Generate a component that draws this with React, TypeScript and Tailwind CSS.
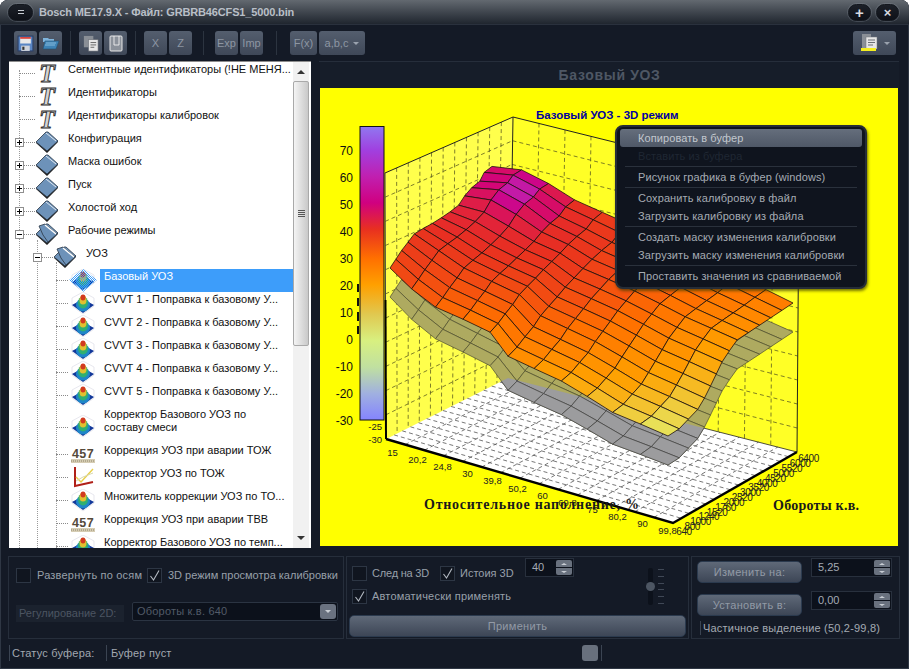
import React from "react";

type Pt = [number, number];

const sans = "font-['Liberation_Sans',Arial,sans-serif]";

/* ---------- chart geometry (coordinates are page pixels, see viewBox) ---------- */
const frontLeft: Pt[] = [[390, 268], [420, 297], [440, 310], [465, 320], [490, 332], [513, 363], [540, 370], [573, 387], [600, 405], [617, 415], [643, 425], [668, 436]];
const backRight: Pt[] = [[492, 167], [517, 170], [540, 180], [567, 197], [613, 217], [660, 238], [710, 262], [793, 303]];
const leftBack: Pt[] = [[390, 268], [402, 250], [415, 233], [435, 222], [458, 207], [468, 193], [480, 183], [485, 172], [492, 167]];
const frontRight: Pt[] = [[668, 436], [678, 430], [700, 407], [710, 387], [723, 360], [737, 340], [763, 323], [793, 303]];

function sample(pts: Pt[], t: number): Pt {
  const seg = pts.slice(1).map((p, i) => Math.hypot(p[0] - pts[i][0], p[1] - pts[i][1]));
  let d = t * seg.reduce((a, b) => a + b, 0);
  for (let i = 0; i < seg.length; i++) {
    if (d <= seg[i] || i === seg.length - 1) {
      const k = seg[i] ? d / seg[i] : 0;
      return [pts[i][0] + (pts[i + 1][0] - pts[i][0]) * k, pts[i][1] + (pts[i + 1][1] - pts[i][1]) * k];
    }
    d -= seg[i];
  }
  return pts[0];
}

function surfacePoint(u: number, v: number): Pt {
  const c0 = sample(frontLeft, u);
  const c1 = sample(backRight, u);
  const d0 = sample(leftBack, v);
  const d1 = sample(frontRight, v);
  const L = frontLeft[0];
  const F = frontLeft[frontLeft.length - 1];
  const B = backRight[0];
  const R = backRight[backRight.length - 1];
  const out = [0, 1].map(
    (i) =>
      (1 - v) * c0[i] + v * c1[i] + (1 - u) * d0[i] + u * d1[i] -
      ((1 - u) * (1 - v) * L[i] + u * (1 - v) * F[i] + (1 - u) * v * B[i] + u * v * R[i])
  );
  const bump = 9 * Math.exp(-((u - 0.13) ** 2 / 0.012 + (v - 0.8) ** 2 / 0.03));
  return [out[0], out[1] - bump];
}

const ramp: [number, number[]][] = [
  [-30, [128, 128, 255]], [-20, [160, 176, 224]], [-10, [192, 224, 160]], [0, [216, 240, 128]],
  [10, [232, 224, 88]], [20, [255, 160, 0]], [30, [255, 112, 0]], [40, [232, 48, 32]],
  [50, [208, 0, 128]], [60, [192, 32, 176]], [70, [160, 64, 224]], [80, [144, 112, 240]],
];

function rampColor(val: number): string {
  for (let i = 0; i < ramp.length - 1; i++) {
    if (val <= ramp[i + 1][0]) {
      const k = Math.max(0, (val - ramp[i][0]) / 10);
      const c = ramp[i][1].map((x, j) => Math.round(x + (ramp[i + 1][1][j] - x) * k));
      return `rgb(${c.join(",")})`;
    }
  }
  return "rgb(144,112,240)";
}

function surfaceValue(u: number, v: number): number {
  const base = (1 - u) * (1 - v) * 37 + u * (1 - v) * 8 + (1 - u) * v * 46 + u * v * 27;
  const middle = 6 * Math.sin(Math.PI * u) * Math.sin(Math.PI * v);
  return base + middle + 16 * Math.exp(-((u - 0.14) ** 2 / 0.008 + (v - 0.85) ** 2 / 0.02));
}

const NU = 11;
const NV = 14;

function cells(shift: (u: number) => number) {
  const out: { key: string; pts: string; u: number; v: number }[] = [];
  for (let j = NV - 1; j >= 0; j--) {
    for (let i = 0; i < NU; i++) {
      const corners = [[i, j], [i + 1, j], [i + 1, j + 1], [i, j + 1]].map(([a, b]) => {
        const p = surfacePoint(a / NU, b / NV);
        return [p[0], p[1] + shift(a / NU)];
      });
      out.push({
        key: `${i}-${j}`,
        pts: corners.map((p) => `${p[0].toFixed(1)},${p[1].toFixed(1)}`).join(" "),
        u: (i + 0.5) / NU,
        v: (j + 0.5) / NV,
      });
    }
  }
  return out;
}

function DashedGrid({ a, b, c, d, nx, ny, stroke }: { a: Pt; b: Pt; c: Pt; d: Pt; nx: number; ny: number; stroke: string }) {
  const lerp = (p: Pt, q: Pt, t: number): Pt => [p[0] + (q[0] - p[0]) * t, p[1] + (q[1] - p[1]) * t];
  const lines: [Pt, Pt][] = [];
  for (let i = 1; i < nx; i++) lines.push([lerp(a, b, i / nx), lerp(d, c, i / nx)]);
  for (let i = 1; i < ny; i++) lines.push([lerp(a, d, i / ny), lerp(b, c, i / ny)]);
  return (
    <g stroke={stroke} strokeWidth={0.8} strokeDasharray="4 3" fill="none">
      {lines.map(([p, q], i) => (
        <line key={i} x1={p[0]} y1={p[1]} x2={q[0]} y2={q[1]} />
      ))}
    </g>
  );
}

function Chart() {
  const zLabels = [70, 60, 50, 40, 30, 20, 10, 0, -10, -20, -30];
  const xLabels = ["15", "20,2", "24,8", "30", "39,8", "50,2", "60", "69,8", "75", "80,2", "90", "99,8"];
  const rpm = ["640", "800", "1000", "1240", "1520", "1760", "2000", "2520", "3000", "3520", "4000", "4520", "5000", "5520", "6000", "6400"];
  const floor: Pt[] = [[386, 439], [673, 523], [797, 452], [508, 378]];
  const floorPts = floor.map((p) => p.join(",")).join(" ");
  const shadow = cells((u) => 29 + 5 * Math.sin(Math.PI * u));
  return (
    <svg viewBox="320 88 578 458" className="block h-[458px] w-[578px]" fontFamily="'Liberation Sans', Arial, sans-serif">
      <defs>
        <linearGradient id="zbar" x1="0" y1="0" x2="0" y2="1">
          {[[0, "#9078f0"], [0.08, "#a040e0"], [0.17, "#c020b0"], [0.26, "#d00080"], [0.35, "#e83020"], [0.45, "#ff7000"], [0.54, "#ffa000"], [0.64, "#e0c850"], [0.73, "#d8f080"], [0.82, "#c0e0a0"], [0.91, "#a0b0e0"], [1, "#8484ff"]].map(([o, c]) => (
            <stop key={String(o)} offset={o as number} stopColor={c as string} />
          ))}
        </linearGradient>
        <clipPath id="floorClip">
          <polygon points={floorPts} />
        </clipPath>
      </defs>
      <rect x="320" y="88" width="578" height="458" fill="#ffff00" />

      {/* walls */}
      <polygon points="386,439 385,173 513,117 508,378" fill="#ffff4c" />
      <polygon points="513,117 799,188 797,452 508,378" fill="#ffff26" />
      <DashedGrid a={[385, 173]} b={[513, 117]} c={[508, 378]} d={[386, 439]} nx={11} ny={11} stroke="#5e5e20" />
      <DashedGrid a={[513, 117]} b={[799, 188]} c={[797, 452]} d={[508, 378]} nx={11} ny={11} stroke="#5e5e20" />
      <polygon points={floorPts} fill="#ffffff" />
      <DashedGrid a={[386, 439]} b={[673, 523]} c={[797, 452]} d={[508, 378]} nx={15} ny={15} stroke="#555555" />

      <path d="M385 173 L513 117 L799 188 L797 452 M513 117 L510 300" stroke="#222" strokeWidth={1} fill="none" />
      <path d="M385.5 300 L386 439" stroke="#000" strokeWidth={2} fill="none" />
      <path d="M385 173 L385.5 300" stroke="#444" strokeWidth={1} fill="none" />
      <path d="M386 439 L673 523 L797 452" stroke="#000" strokeWidth={2.4} fill="none" />
      <path d="M508 378 L797 452" stroke="#222" strokeWidth={0.8} fill="none" />

      {/* shadow of the surface on walls and floor */}
      <g stroke="#4b4b32" strokeWidth={0.7}>
        {shadow.map((c) => (
          <polygon key={c.key} points={c.pts} fill="#aeaa60" />
        ))}
      </g>
      <g stroke="#444" strokeWidth={0.7} clipPath="url(#floorClip)">
        {shadow.map((c) => (
          <polygon key={c.key} points={c.pts} fill="#9c9c9e" />
        ))}
      </g>

      {/* surface */}
      <g stroke="#1c1010" strokeWidth={0.8} strokeLinejoin="round">
        {cells(() => 0).map((c) => (
          <polygon key={c.key} points={c.pts} fill={rampColor(surfaceValue(c.u, c.v))} />
        ))}
      </g>

      {/* colour bar */}
      <path d="M358 284 v8 M358 298 v8 M358 312 v9 M358 326 v8" stroke="#111" strokeWidth={2} />
      <rect x="360" y="126.5" width="24" height="293.5" fill="url(#zbar)" stroke="#111" strokeWidth={1} />
      <g fontSize={12} fill="#111" textAnchor="end">
        {zLabels.map((z, i) => (
          <text key={z} x={353} y={154.5 + i * 27}>{z}</text>
        ))}
      </g>
      <g fontSize={9.5} fill="#222" textAnchor="end">
        <text x={382} y={430}>-25</text>
        <text x={382} y={443}>-30</text>
      </g>
      <g fontSize={9.5} fill="#222" textAnchor="middle">
        {xLabels.map((t, i) => (
          <text key={t} x={392.5 + i * 25} y={456 + i * 7.1}>{t}</text>
        ))}
      </g>
      <g fontSize={10} fill="#222" textAnchor="middle" letterSpacing={-0.4}>
        {rpm.map((t, i) => (
          <text key={t} x={684 + i * 8.3} y={535 - i * 4.85}>{t}</text>
        ))}
      </g>

      <text x={536} y={119} fontSize={11.5} fontWeight={700} fill="#0000a0">Базовый УОЗ - 3D режим</text>
      <g fontFamily="'Liberation Serif', serif" fontWeight={700} fontSize={14} fill="#1a1a1a">
        <text x={424} y={509} letterSpacing={0.75}>Относительное наполнение, %</text>
        <text x={773} y={510} letterSpacing={0.25}>Обороты к.в.</text>
      </g>
    </svg>
  );
}

/* ---------- tree icons ---------- */
function TIcon() {
  return (
    <svg viewBox="0 0 22 23" className="h-[23px] w-[22px] overflow-visible">
      <text x="11" y="20" textAnchor="middle" fontFamily="'Liberation Serif', serif" fontStyle="italic" fontWeight={700} fontSize={26} fill="#d4d4d4" stroke="#2e2e2e" strokeWidth={0.9}>T</text>
    </svg>
  );
}

function FolderIcon({ open }: { open?: boolean }) {
  return (
    <svg viewBox="0 0 22 23" className="h-[23px] w-[22px]">
      <polygon points="11,22 22,11 21,9 11,19 1,11 0,12" fill="#222" />
      <polygon points="0,11 10,1 12,1 22,10 11,20" fill="#6d92b9" stroke="#2a3644" strokeWidth={0.8} />
      <polyline points="10,2 20,10" stroke="#fff" strokeWidth={0.8} fill="none" />
      {open && <polygon points="3,3 9,1 21,11 12,19 7,12" fill="#6d92b9" stroke="#2a3644" strokeWidth={0.8} />}
      {open && <polyline points="9,2 20,11" stroke="#fff" strokeWidth={1.4} fill="none" />}
    </svg>
  );
}

function SurfaceIcon({ selected }: { selected?: boolean }) {
  return (
    <svg viewBox="0 0 28 23" className="h-[23px] w-[28px]">
      {selected && (
        <defs>
          <pattern id="dither" width="2" height="2" patternUnits="userSpaceOnUse">
            <rect width="1" height="1" fill="#3d9dfa" />
            <rect x="1" y="1" width="1" height="1" fill="#3d9dfa" />
          </pattern>
        </defs>
      )}
      <polygon points="14,0 25,6 25,14 14,22 3,14 3,6" fill="#ffffff" stroke="#dcdce6" strokeWidth={0.7} />
      <polygon points="14,21 25,13 14,7 3,13" fill="#12389a" />
      <ellipse cx="14" cy="13" rx="7" ry="6.500" fill="#1f86c8" />
      <ellipse cx="14" cy="10.500" rx="5" ry="6" fill="#30b070" />
      <ellipse cx="14" cy="8" rx="3.500" ry="4.500" fill="#e0c030" />
      <ellipse cx="14" cy="5.500" rx="2.500" ry="3" fill="#d23a20" />
      {selected && <polygon points="14,0 28,11 14,23 0,11" fill="url(#dither)" />}
    </svg>
  );
}

function NumIcon() {
  return (
    <svg viewBox="0 0 28 23" className="h-[23px] w-[28px]">
      <text x="14" y="15" textAnchor="middle" fontFamily="'Liberation Sans', sans-serif" fontWeight={700} fontSize={12.5} fill="#55493a" letterSpacing={0.4}>457</text>
      <rect x="2" y="16" width="24" height="4" fill="#d6cdb4" />
      <path d="M2 18h24" stroke="#8d8468" strokeWidth={1} strokeDasharray="1 1" />
    </svg>
  );
}

function GraphIcon() {
  return (
    <svg viewBox="0 0 28 23" className="h-[23px] w-[28px]">
      <path d="M6 1 V20 L24 16" stroke="#b02018" strokeWidth={2} fill="none" />
      <path d="M7 11 L12 16 L24 3" stroke="#e8cf48" strokeWidth={1.4} fill="none" />
      <path d="M7 15 L14 11 L24 7" stroke="#d8d8b0" strokeWidth={1} fill="none" />
    </svg>
  );
}

/* ---------- tree ---------- */
type Row = { text: string[]; level: 0 | 1 | 2; icon: "t" | "folder" | "open" | "surf" | "num" | "graph"; box?: "+" | "-"; selected?: boolean };

const rows: Row[] = [
  { text: ["Сегментные идентификаторы (!НЕ МЕНЯ..."], level: 0, icon: "t" },
  { text: ["Идентификаторы"], level: 0, icon: "t" },
  { text: ["Идентификаторы калибровок"], level: 0, icon: "t" },
  { text: ["Конфигурация"], level: 0, icon: "folder", box: "+" },
  { text: ["Маска ошибок"], level: 0, icon: "folder", box: "+" },
  { text: ["Пуск"], level: 0, icon: "folder", box: "+" },
  { text: ["Холостой ход"], level: 0, icon: "folder", box: "+" },
  { text: ["Рабочие режимы"], level: 0, icon: "open", box: "-" },
  { text: ["УОЗ"], level: 1, icon: "open", box: "-" },
  { text: ["Базовый УОЗ"], level: 2, icon: "surf", selected: true },
  { text: ["CVVT 1 - Поправка к базовому У..."], level: 2, icon: "surf" },
  { text: ["CVVT 2 - Поправка к базовому У..."], level: 2, icon: "surf" },
  { text: ["CVVT 3 - Поправка к базовому У..."], level: 2, icon: "surf" },
  { text: ["CVVT 4 - Поправка к базовому У..."], level: 2, icon: "surf" },
  { text: ["CVVT 5 - Поправка к базовому У..."], level: 2, icon: "surf" },
  { text: ["Корректор Базового УОЗ по", "составу смеси"], level: 2, icon: "surf" },
  { text: ["Коррекция УОЗ при аварии ТОЖ"], level: 2, icon: "num" },
  { text: ["Корректор УОЗ по ТОЖ"], level: 2, icon: "graph" },
  { text: ["Множитель коррекции УОЗ по ТО..."], level: 2, icon: "surf" },
  { text: ["Коррекция УОЗ при аварии ТВВ"], level: 2, icon: "num" },
  { text: ["Корректор Базового УОЗ по темп..."], level: 2, icon: "surf" },
];

function RowIcon({ row }: { row: Row }) {
  if (row.icon === "t") return <TIcon />;
  if (row.icon === "folder") return <FolderIcon />;
  if (row.icon === "open") return <FolderIcon open />;
  if (row.icon === "num") return <NumIcon />;
  if (row.icon === "graph") return <GraphIcon />;
  return <SurfaceIcon selected={row.selected} />;
}

const rowIndent = ["pl-[27px]", "pl-[45px]", "pl-[60px]"];
const stubPos = ["left-[10px] w-[16px]", "left-[28px] w-[16px]", "left-[47px] w-[12px]"];
const boxPos = ["left-[6px]", "left-[24px]", ""];

function TreeRow({ row }: { row: Row }) {
  const tall = row.text.length > 1;
  return (
    <div className={`relative flex shrink-0 ${tall ? "h-[36px]" : "h-[23px]"} ${rowIndent[row.level]}`}>
      <div className={`absolute border-t border-dotted border-[#8a8a8a] ${stubPos[row.level]} ${tall ? "top-[20px]" : "top-[11px]"}`} />
      {row.box && (
        <div className={`absolute top-[7px] flex h-[9px] w-[9px] items-center justify-center border border-[#8f8f8f] bg-white ${boxPos[row.level]}`}>
          <div className="h-px w-[5px] bg-black" />
          {row.box === "+" && <div className="absolute h-[5px] w-px bg-black" />}
        </div>
      )}
      <div className={`flex shrink-0 items-center justify-center ${row.level === 2 ? "w-[28px] mr-[3px]" : "w-[22px] mr-[6px]"} ${tall ? "h-[38px]" : "h-[23px]"}`}>
        <RowIcon row={row} />
      </div>
      <div className={`flex-1 pl-[4px] pt-[1px] text-[11px] leading-[13px] whitespace-nowrap ${row.selected ? "bg-[#3d9dfa] text-white" : "text-[#111]"}`}>
        {row.text.map((t) => (
          <div key={t}>{t}</div>
        ))}
      </div>
    </div>
  );
}

function Tree() {
  return (
    <div className={`flex h-[487px] w-[302px] shrink-0 overflow-hidden border-t border-[#8d8d8d] bg-white pr-[2px] ${sans}`}>
      <div className="relative flex w-[284px] shrink-0 flex-col overflow-hidden">
        <div className="absolute left-[10px] top-[8px] h-[480px] border-l border-dotted border-[#9a9a9a]" />
        <div className="absolute left-[28px] top-[178px] h-[310px] border-l border-dotted border-[#9a9a9a]" />
        <div className="absolute left-[47px] top-[200px] h-[290px] border-l border-dotted border-[#9a9a9a]" />
        {rows.map((r) => (
          <TreeRow key={r.text[0]} row={r} />
        ))}
      </div>
      <div className="flex w-[16px] shrink-0 flex-col bg-[#f1f1f1]">
        <div className="flex h-[19px] shrink-0 items-center justify-center">
          <div className="h-0 w-0 border-x-[4px] border-b-[4px] border-x-transparent border-b-[#333]" />
        </div>
        <div className="flex h-[265px] shrink-0 items-center justify-center rounded-[2px] border border-[#a9a9a9] bg-gradient-to-r from-[#f4f4f4] to-[#c9c9c9]">
          <div className="flex flex-col gap-[1px]">
            <div className="h-px w-[7px] bg-[#555]" />
            <div className="h-px w-[7px] bg-[#555]" />
            <div className="h-px w-[7px] bg-[#555]" />
            <div className="h-px w-[7px] bg-[#555]" />
          </div>
        </div>
        <div className="flex-1" />
        <div className="flex h-[20px] shrink-0 items-center justify-center">
          <div className="h-0 w-0 border-x-[4px] border-t-[4px] border-x-transparent border-t-[#333]" />
        </div>
      </div>
    </div>
  );
}

/* ---------- toolbar ---------- */
function ToolBtn({ children, className = "w-[23px]" }: { children: React.ReactNode; className?: string }) {
  return (
    <div className={`flex h-[24px] shrink-0 items-center justify-center rounded-[3px] bg-gradient-to-b from-[#545e6e] to-[#3f4858] text-[11px] text-[#8d96a3] ${className}`}>
      {children}
    </div>
  );
}

const Sep = () => <div className="mx-[8px] h-[24px] w-px shrink-0 bg-[#2c3440]" />;

function Toolbar() {
  return (
    <div className={`flex h-[35px] shrink-0 items-center pl-[14px] pr-[13px] pt-[1px] ${sans}`}>
      <div className="flex gap-[2px]">
        <ToolBtn>
          <svg viewBox="0 0 16 16" className="h-[17px] w-[17px]">
            <rect x="1" y="1" width="14" height="14" fill="#5a86c4" stroke="#2b3f66" />
            <rect x="3" y="2" width="10" height="6" fill="#e8e8e8" />
            <rect x="3" y="2" width="10" height="1.500" fill="#d8322a" />
            <rect x="4" y="10" width="8" height="5" fill="#cfd4dc" />
            <rect x="5" y="11" width="2" height="3" fill="#333" />
          </svg>
        </ToolBtn>
        <ToolBtn>
          <svg viewBox="0 0 18 16" className="h-[16px] w-[18px]">
            <path d="M1 3h5l1 1h5v3H1z" fill="#7fb4dc" />
            <path d="M3 6h14l-3 8H1z" fill="#3e84b6" stroke="#24506f" strokeWidth={0.6} />
            <path d="M4 8h10M3 10h10" stroke="#a7d2ec" strokeWidth={0.7} />
          </svg>
        </ToolBtn>
      </div>
      <Sep />
      <div className="flex gap-[2px]">
        <ToolBtn>
          <svg viewBox="0 0 18 18" className="h-[17px] w-[17px]">
            <rect x="2" y="1" width="10" height="12" fill="#8a8f96" />
            <rect x="7" y="5" width="10" height="12" fill="#e6e6e6" stroke="#6a6f76" strokeWidth={0.6} />
            <path d="M9 8h6M9 10.500h6M9 13h4" stroke="#555" strokeWidth={0.9} />
          </svg>
        </ToolBtn>
        <ToolBtn>
          <svg viewBox="0 0 18 18" className="h-[18px] w-[18px]">
            <rect x="3" y="2" width="12" height="15" rx="1" fill="#8b919a" stroke="#e8e8e8" strokeWidth={1} />
            <path d="M7 2v9h5V2" fill="none" stroke="#f0f0f0" strokeWidth={0.9} />
          </svg>
        </ToolBtn>
      </div>
      <Sep />
      <div className="flex gap-[2px]">
        <ToolBtn>X</ToolBtn>
        <ToolBtn>Z</ToolBtn>
      </div>
      <div className="mx-[11px] h-[24px] w-px shrink-0 bg-[#2c3440]" />
      <div className="flex gap-[2px]">
        <ToolBtn>Exp</ToolBtn>
        <ToolBtn>Imp</ToolBtn>
      </div>
      <div className="mx-[13px] h-[24px] w-px shrink-0 bg-[#2c3440]" />
      <div className="flex gap-[2px]">
        <ToolBtn className="w-[27px]">F(x)</ToolBtn>
        <ToolBtn className="w-[46px] gap-[5px]">
          a,b,c
          <div className="h-0 w-0 border-x-[3px] border-t-[3px] border-x-transparent border-t-[#9aa2ae]" />
        </ToolBtn>
      </div>
      <div className="flex-1" />
      <ToolBtn className="w-[43px] gap-[5px]">
        <svg viewBox="0 0 20 20" className="h-[20px] w-[20px]">
          <rect x="3" y="1" width="9" height="14" fill="#8a8f96" />
          <rect x="7" y="4" width="11" height="12" fill="#e6e6e6" stroke="#70757c" strokeWidth={0.5} />
          <path d="M9 7h7M9 9.500h7M9 12h5" stroke="#5b6066" strokeWidth={0.9} />
          <rect x="2" y="15" width="15" height="3" fill="#f4ee20" />
        </svg>
        <div className="h-0 w-0 border-x-[3px] border-t-[3px] border-x-transparent border-t-[#9aa2ae]" />
      </ToolBtn>
    </div>
  );
}

/* ---------- form bits ---------- */
function Check({ on, className = "" }: { on?: boolean; className?: string }) {
  return (
    <div className={`flex h-[15px] w-[15px] shrink-0 items-center justify-center border border-[#2d3644] bg-[#10151f] ${className}`}>
      {on && (
        <svg viewBox="0 0 13 13" className="h-[13px] w-[13px]">
          <path d="M2.500 7 L5.500 11 L11 1.500" fill="none" stroke="#b4bac2" strokeWidth={1.1} />
        </svg>
      )}
    </div>
  );
}

function Spinner({ value, className }: { value: string; className: string }) {
  return (
    <div className={`flex h-[19px] shrink-0 items-center justify-between border border-[#28303d] bg-[#0c111b] pl-[6px] pr-[1px] text-[11px] text-[#a4aab3] ${className}`}>
      {value}
      <div className="flex w-[16px] flex-col gap-px">
        <div className="flex h-[7px] items-center justify-center rounded-t-[2px] bg-[#69717e]">
          <div className="h-0 w-0 border-x-[3px] border-b-[2px] border-x-transparent border-b-[#c9ced5]" />
        </div>
        <div className="flex h-[7px] items-center justify-center rounded-b-[2px] bg-[#69717e]">
          <div className="h-0 w-0 border-x-[3px] border-t-[2px] border-x-transparent border-t-[#c9ced5]" />
        </div>
      </div>
    </div>
  );
}

function BigBtn({ children, className }: { children: React.ReactNode; className: string }) {
  return (
    <div className={`flex h-[22px] shrink-0 items-center justify-center rounded-[5px] border border-[#2b3a4e] bg-gradient-to-b from-[#5f6978] to-[#3d4656] text-[11px] tracking-[0.3px] text-[#929aa6] ${className}`}>
      {children}
    </div>
  );
}

function Bottom() {
  return (
    <div className={`flex h-[93px] shrink-0 gap-[2px] px-[8px] pt-[7px] text-[11px] text-[#98a0aa] ${sans}`}>
      <div className="flex h-[83px] w-[336px] shrink-0 flex-col border border-[#262e3b] pl-[7px] pt-[10px]">
        <div className="flex items-center whitespace-nowrap">
          <Check />
          <span className="ml-[6px] w-[104px] shrink-0 tracking-[0.2px]">Развернуть по осям</span>
          <Check on className="ml-[6px]" />
          <span className="ml-[6px]">3D режим просмотра калибровки</span>
        </div>
        <div className="mt-[21px] flex items-center">
          <div className="flex h-[17px] w-[108px] shrink-0 items-center whitespace-nowrap bg-[#1b222e] pl-[3px] text-[#4c5562]">Регулирование 2D:</div>
          <div className="-mt-[4px] ml-[8px] flex h-[19px] w-[206px] items-center justify-between rounded-[2px] border border-[#2b3442] bg-[#0c111b] pl-[4px] pr-[1px] tracking-[0.2px] text-[#525b68]">
            Обороты к.в. 640
            <div className="flex h-[15px] w-[16px] items-center justify-center rounded-[3px] bg-[#6a7280]">
              <div className="h-0 w-0 border-x-[3px] border-t-[3px] border-x-transparent border-t-[#c9ced5]" />
            </div>
          </div>
        </div>
      </div>

      <div className="flex h-[83px] w-[343px] shrink-0 flex-col border border-[#262e3b] pl-[5px] pt-[1px]">
        <div className="flex items-start">
          <div className="flex flex-1 flex-col">
            <div className="flex items-start whitespace-nowrap">
              <Check className="mt-[8px]" />
              <span className="ml-[5px] mt-[8px] w-[56px] shrink-0 leading-[15px] tracking-[-0.2px]">След на 3D</span>
              <Check on className="ml-[12px] mt-[8px]" />
              <span className="ml-[5px] mt-[8px] w-[54px] shrink-0 leading-[15px]">Истоия 3D</span>
              <Spinner value="40" className="ml-[11px] w-[49px]" />
            </div>
            <div className="mt-[8px] flex items-center">
              <Check on />
              <span className="ml-[5px] leading-[15px] tracking-[0.2px]">Автоматически применять</span>
            </div>
          </div>
          <div className="relative mr-[24px] mt-[10px] h-[37px] w-[16px]">
            <div className="absolute left-0 top-0 h-[37px] w-[5px] rounded-[2px] bg-[#0c111b]" />
            <div className="absolute left-[-2px] top-[14px] h-[9px] w-[9px] rounded-full bg-[#4d5663]" />
            <div className="absolute left-[10px] top-[1px] flex h-[35px] flex-col justify-between">
              {[0, 1, 2, 3, 4, 5].map((i) => (
                <div key={i} className="h-px w-[6px] bg-[#404856]" />
              ))}
            </div>
          </div>
        </div>
        <BigBtn className="-ml-[3px] mt-[10px] w-[337px]">Применить</BigBtn>
      </div>

      <div className="flex h-[83px] w-[209px] shrink-0 flex-col border border-[#262e3b] pl-[5px] pt-[1px]">
        <div className="flex gap-[9px]">
          <BigBtn className="mt-[3px] w-[105px]">Изменить на:</BigBtn>
          <Spinner value="5,25" className="w-[81px]" />
        </div>
        <div className="mt-[8px] flex gap-[9px]">
          <BigBtn className="mt-[3px] w-[105px]">Установить в:</BigBtn>
          <Spinner value="0,00" className="w-[81px]" />
        </div>
        <div className="ml-[3px] mt-[5px] flex h-[14px] items-center border-l border-[#3b4452] pl-[2px] tracking-[0.2px] text-[#a4aab3] whitespace-nowrap">
          Частичное выделение (50,2-99,8)
        </div>
      </div>
    </div>
  );
}

/* ---------- context menu ---------- */
function MenuItem({ text, hot, off }: { text: string; hot?: boolean; off?: boolean }) {
  return (
    <div className={`flex h-[18px] items-center rounded-[3px] pl-[18px] whitespace-nowrap ${hot ? "bg-gradient-to-b from-[#656e7c] to-[#4f5867] text-[#c2c7ce]" : off ? "text-[#1f2733]" : "text-[#a5abb3]"}`}>
      {text}
    </div>
  );
}

const MenuSep = () => <div className="mx-[5px] my-[1px] h-px bg-[#2a313c]" />;

function ContextMenu() {
  return (
    <div className={`absolute left-[295px] top-[37px] w-[252px] rounded-[8px] border-2 border-[#262d38] bg-[#0f141e] px-[3px] py-[2px] text-[11px] tracking-[0.09px] shadow-[1px_2px_3px_rgba(60,60,0,0.7)] ${sans}`}>
      <MenuItem text="Копировать в буфер" hot />
      <MenuItem text="Вставить из буфера" off />
      <MenuSep />
      <MenuItem text="Рисунок графика в буфер (windows)" />
      <MenuSep />
      <MenuItem text="Сохранить калибровку в файл" />
      <MenuItem text="Загрузить калибровку из файла" />
      <MenuSep />
      <MenuItem text="Создать маску изменения калибровки" />
      <MenuItem text="Загрузить маску изменения калибровки" />
      <MenuSep />
      <MenuItem text="Проставить значения из сравниваемой" />
    </div>
  );
}

function RoundBtn({ children, className }: { children: React.ReactNode; className: string }) {
  return (
    <div className={`flex h-[17px] shrink-0 items-center justify-center rounded-full border border-[#14181f] bg-gradient-to-b from-[#1c2028] to-[#0e1118] shadow-[0_0_0_1px_rgba(150,158,170,0.25)] ${className}`}>
      {children}
    </div>
  );
}

export default function App() {
  return (
    <div className="flex h-[669px] w-[909px] flex-col overflow-hidden rounded-t-[8px] bg-[#141a26] shadow-[inset_0_0_0_1px_#2f3744]">
      {/* title bar */}
      <div className={`flex h-[25px] shrink-0 items-center border-b border-[#2a313d] bg-gradient-to-b from-[#636970] to-[#20262f] pl-[8px] pr-[10px] ${sans}`}>
        <RoundBtn className="w-[25px]">
          <div className="flex flex-col gap-[2px]">
            <div className="h-px w-[6px] bg-[#c8ccd2]" />
            <div className="h-px w-[6px] bg-[#c8ccd2]" />
          </div>
        </RoundBtn>
        <span className="ml-[6px] text-[11px] font-bold tracking-[-0.15px] text-[#b9bfc7]">Bosch ME17.9.X - Файл: GRBRB46CFS1_5000.bin</span>
        <div className="flex-1" />
        <RoundBtn className="w-[23px]">
          <span className="text-[15px] font-bold leading-none text-[#d8dbe0]">+</span>
        </RoundBtn>
        <RoundBtn className="ml-[5px] w-[23px]">
          <span className="text-[13px] font-bold leading-none text-[#d8dbe0]">×</span>
        </RoundBtn>
      </div>

      <Toolbar />

      {/* main area */}
      <div className="flex h-[489px] shrink-0 pl-[9px] pt-px">
        <Tree />
        <div className="ml-[8px] flex w-[580px] shrink-0 flex-col border-t border-[#262e3b] pl-px">
          <div className={`flex h-[26px] shrink-0 items-center justify-center bg-[#161d29] text-[14px] font-bold tracking-[0.7px] text-[#4e5764] ${sans}`}>
            Базовый УОЗ
          </div>
          <div className="relative h-[458px] w-[578px]">
            <Chart />
            <ContextMenu />
          </div>
        </div>
      </div>

      <Bottom />

      {/* status bar */}
      <div className={`flex h-[27px] shrink-0 items-start pl-[9px] pt-[3px] text-[11px] tracking-[0.2px] text-[#a2a8b1] ${sans}`}>
        <div className="flex h-[16px] w-[97px] shrink-0 items-center border-l border-[#3b4452] pl-[2px]">Статус буфера:</div>
        <div className="flex h-[16px] w-[476px] shrink-0 items-center border-l border-[#3b4452] pl-[4px]">Буфер пуст</div>
        <div className="h-[16px] w-[16px] shrink-0 rounded-[3px] bg-[#68707d]" />
        <div className="ml-[3px] h-[16px] w-px shrink-0 bg-[#3b4452]" />
      </div>
    </div>
  );
}
